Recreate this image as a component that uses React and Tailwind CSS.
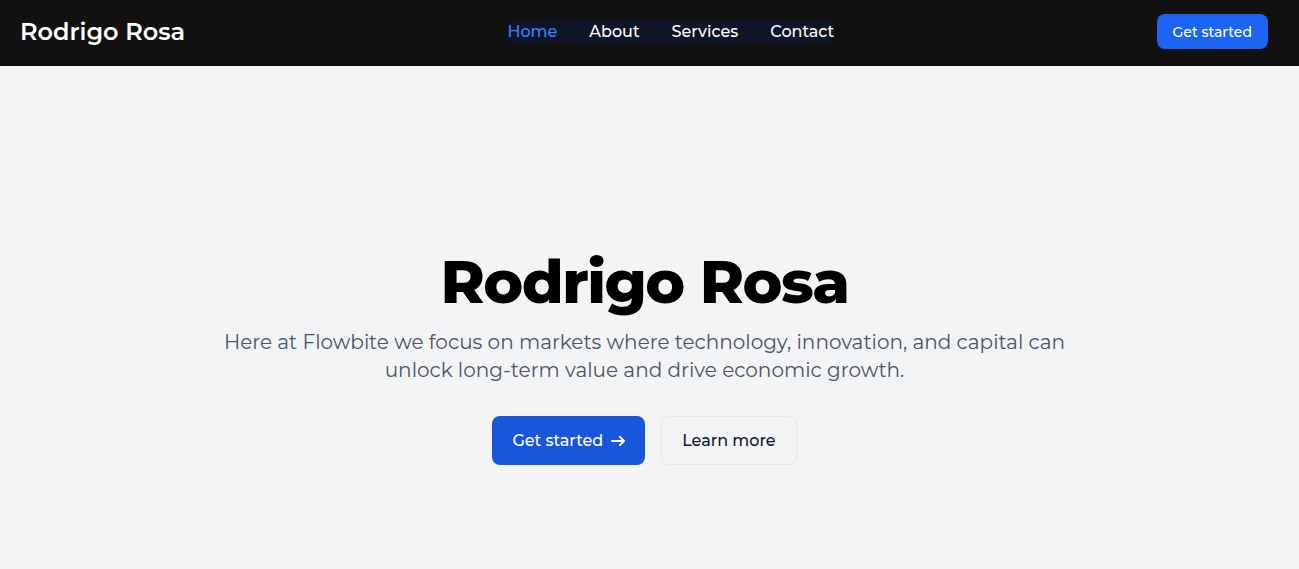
import { useState } from 'react';

const links = ['Home', 'About', 'Services', 'Contact'];

export default function App() {
  const [active, setActive] = useState('Home');

  return (
    <div className="min-h-screen bg-[#f3f4f6] font-['Montserrat','DejaVu_Sans',sans-serif]">
      <nav className="h-[66px] bg-[#111111] flex items-center justify-between pl-5 pr-[31px] pb-[3px]">
        <a href="#" className="text-white text-2xl font-semibold">Rodrigo Rosa</a>
        <ul className="flex items-center gap-8 bg-[#0e1527] rounded-md h-6">
          {links.map((l) => (
            <li key={l}>
              <a
                href="#"
                onClick={() => setActive(l)}
                className={`text-base font-medium ${active === l ? 'text-[#3b82f6]' : 'text-white'}`}
              >
                {l}
              </a>
            </li>
          ))}
        </ul>
        <button className="bg-[#1c64f2] hover:bg-[#1a56db] text-white text-sm font-medium rounded-lg px-4 h-[35px]">
          Get started
        </button>
      </nav>

      <section className="flex flex-col items-center pt-[186px] pr-[10px] text-center">
        <h1 className="text-6xl leading-none font-extrabold tracking-tight text-black">Rodrigo Rosa</h1>
        <p className="mt-4 max-w-[870px] text-xl leading-7 text-[#4b5563]">
          Here at Flowbite we focus on markets where technology, innovation, and capital can unlock long-term value and drive economic growth.
        </p>
        <div className="mt-8 flex gap-4">
          <a href="#" className="inline-flex items-center h-[49px] px-5 rounded-lg bg-[#1a56db] text-white text-base font-medium">
            Get started
            <svg className="ml-2 w-3.5 h-3.5" viewBox="0 0 14 10" fill="none">
              <path d="M1 5h12m0 0L9 1m4 4L9 9" stroke="currentColor" strokeWidth="2" strokeLinecap="round" strokeLinejoin="round" />
            </svg>
          </a>
          <a href="#" className="inline-flex items-center h-[49px] px-5 rounded-lg border border-[#e5e7eb] text-gray-900 text-base font-medium">
            Learn more
          </a>
        </div>
      </section>
    </div>
  );
}
